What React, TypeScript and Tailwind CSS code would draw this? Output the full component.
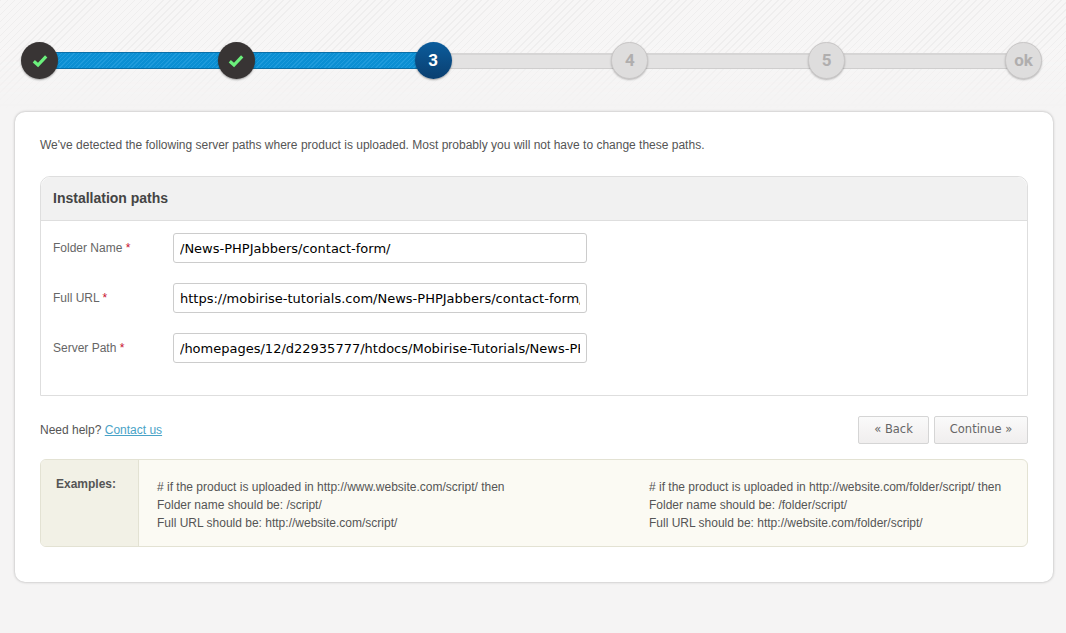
import React from "react";

const Tick = () => (
  <svg width="16" height="14" viewBox="0 0 16 14" fill="none">
    <path d="M1.8 7.2 L6 11 L14.2 2.4" stroke="#6bf07c" strokeWidth="3.2" />
  </svg>
);

const StepDone = () => (
  <div className="relative z-10 flex h-[37px] w-[37px] shrink-0 items-center justify-center rounded-full bg-[#383434] shadow-[0_1px_2px_rgba(0,0,0,0.35)]">
    <Tick />
  </div>
);

const StepCurrent = ({ label }: { label: string }) => (
  <div className="relative z-10 flex h-[37px] w-[37px] shrink-0 items-center justify-center rounded-full bg-gradient-to-b from-[#0b5c9c] to-[#0a3f70] text-[17px] font-bold text-white shadow-[0_1px_2px_rgba(0,0,0,0.35)] [font-family:'Roboto',sans-serif]">
    {label}
  </div>
);

const StepTodo = ({ label }: { label: string }) => (
  <div className="relative z-10 flex h-[37px] w-[37px] shrink-0 items-center justify-center rounded-full border border-[#c9c7c7] bg-[#dedddd] text-[17px] font-bold text-[#b0aeae] shadow-[0_1px_2px_rgba(0,0,0,0.25)] [font-family:'Roboto',sans-serif]">
    {label}
  </div>
);

const BarDone = () => (
  <div className="-mx-1 h-[17px] flex-1 border-y border-[#0a6fa8] bg-[#0b8fd3] bg-[repeating-linear-gradient(135deg,#0b8fd3_0px,#0b8fd3_2px,#1f9bdc_2px,#1f9bdc_3px)]" />
);

const BarTodo = () => (
  <div className="-mx-1 h-[16px] flex-1 border-t-2 border-b border-t-[#d6d5d5] border-b-[#cfcece] bg-[#e3e2e2]" />
);

const Field = ({ label, value }: { label: string; value: string }) => (
  <div className="flex h-[30px] items-center">
    <label className="w-[120px] shrink-0 text-[#666]">
      {label} <span className="text-[#c8102e]">*</span>
    </label>
    <input
      readOnly
      value={value}
      className="h-[30px] w-[414px] rounded-[3px] border border-[#ccc] bg-white px-[6px] text-[13px] text-black outline-none [font-family:'DejaVu_Sans',sans-serif]"
    />
  </div>
);

const Example = ({ lines }: { lines: string[] }) => (
  <div className="leading-[18px]">
    {lines.map((l) => (
      <div key={l}>{l}</div>
    ))}
  </div>
);

const App: React.FC = () => {
  return (
    <div className="relative min-h-[633px] bg-[#f5f4f4] text-[12px] text-[#555] [font-family:'Liberation_Sans',Arial,sans-serif]">
      {/* striped band behind the stepper */}
      <div className="absolute inset-x-0 top-0 h-[110px] bg-[repeating-linear-gradient(135deg,#efeeee_0px,#efeeee_1px,#f7f6f6_1px,#f7f6f6_5px)] [mask-image:linear-gradient(to_bottom,black_40%,transparent)]" />

      <div className="relative flex flex-col px-[15px] pt-[42px]">
        {/* Stepper */}
        <div className="mr-[3px] flex items-center px-[6px]">
          <StepDone />
          <BarDone />
          <StepDone />
          <BarDone />
          <StepCurrent label="3" />
          <BarTodo />
          <StepTodo label="4" />
          <BarTodo />
          <StepTodo label="5" />
          <BarTodo />
          <StepTodo label="ok" />
        </div>

        {/* Card */}
        <div className="mt-[33px] h-[470px] w-[1038px] rounded-[10px] bg-white px-[25px] pt-[26px] shadow-[0_0_3px_rgba(0,0,0,0.3)]">
          <p className="leading-[14px]">
            We've detected the following server paths where product is uploaded. Most probably you will not have to change these paths.
          </p>

          <div className="mt-[24px] w-[988px] rounded-t-[10px] border border-[#dedede]">
            <div className="flex h-[44px] items-center rounded-t-[10px] border-b border-[#dedede] bg-[#f1f1f1] px-[12px] text-[14px] font-bold text-[#444]">
              Installation paths
            </div>
            <div className="flex h-[174px] flex-col gap-[20px] px-[12px] pt-[12px]">
              <Field label="Folder Name" value="/News-PHPJabbers/contact-form/" />
              <Field label="Full URL" value="https://mobirise-tutorials.com/News-PHPJabbers/contact-form/" />
              <Field label="Server Path" value="/homepages/12/d22935777/htdocs/Mobirise-Tutorials/News-PHPJabbers/contact-form/" />
            </div>
          </div>

          <div className="mt-[20px] flex w-[988px] items-center justify-between">
            <div>
              Need help? <a className="text-[#4aa3c7] underline">Contact us</a>
            </div>
            <div className="flex gap-[5px] text-[11.5px] text-[#666] [font-family:'DejaVu_Sans',sans-serif]">
              <button className="h-[28px] w-[71px] rounded-[2px] border border-[#d5d5d5] bg-gradient-to-b from-[#fafafa] to-[#f0eeee]">« Back</button>
              <button className="h-[28px] w-[94px] rounded-[2px] border border-[#d5d5d5] bg-gradient-to-b from-[#fafafa] to-[#f0eeee]">Continue »</button>
            </div>
          </div>

          <div className="mt-[15px] flex h-[88px] w-[988px] overflow-hidden rounded-[6px] border border-[#e3e2d3] bg-[#fbfaf3]">
            <div className="w-[98px] shrink-0 border-r border-[#e3e2d3] bg-[#f2f1e6] pl-[15px] pt-[15px] font-bold text-[#555]">
              Examples:
            </div>
            <div className="flex flex-1 pl-[18px] pt-[18px]">
              <div className="w-[492px]">
                <Example
                  lines={[
                    "# if the product is uploaded in http://www.website.com/script/ then",
                    "Folder name should be: /script/",
                    "Full URL should be: http://website.com/script/",
                  ]}
                />
              </div>
              <Example
                lines={[
                  "# if the product is uploaded in http://website.com/folder/script/ then",
                  "Folder name should be: /folder/script/",
                  "Full URL should be: http://website.com/folder/script/",
                ]}
              />
            </div>
          </div>
        </div>
      </div>
    </div>
  );
};

export default App;
